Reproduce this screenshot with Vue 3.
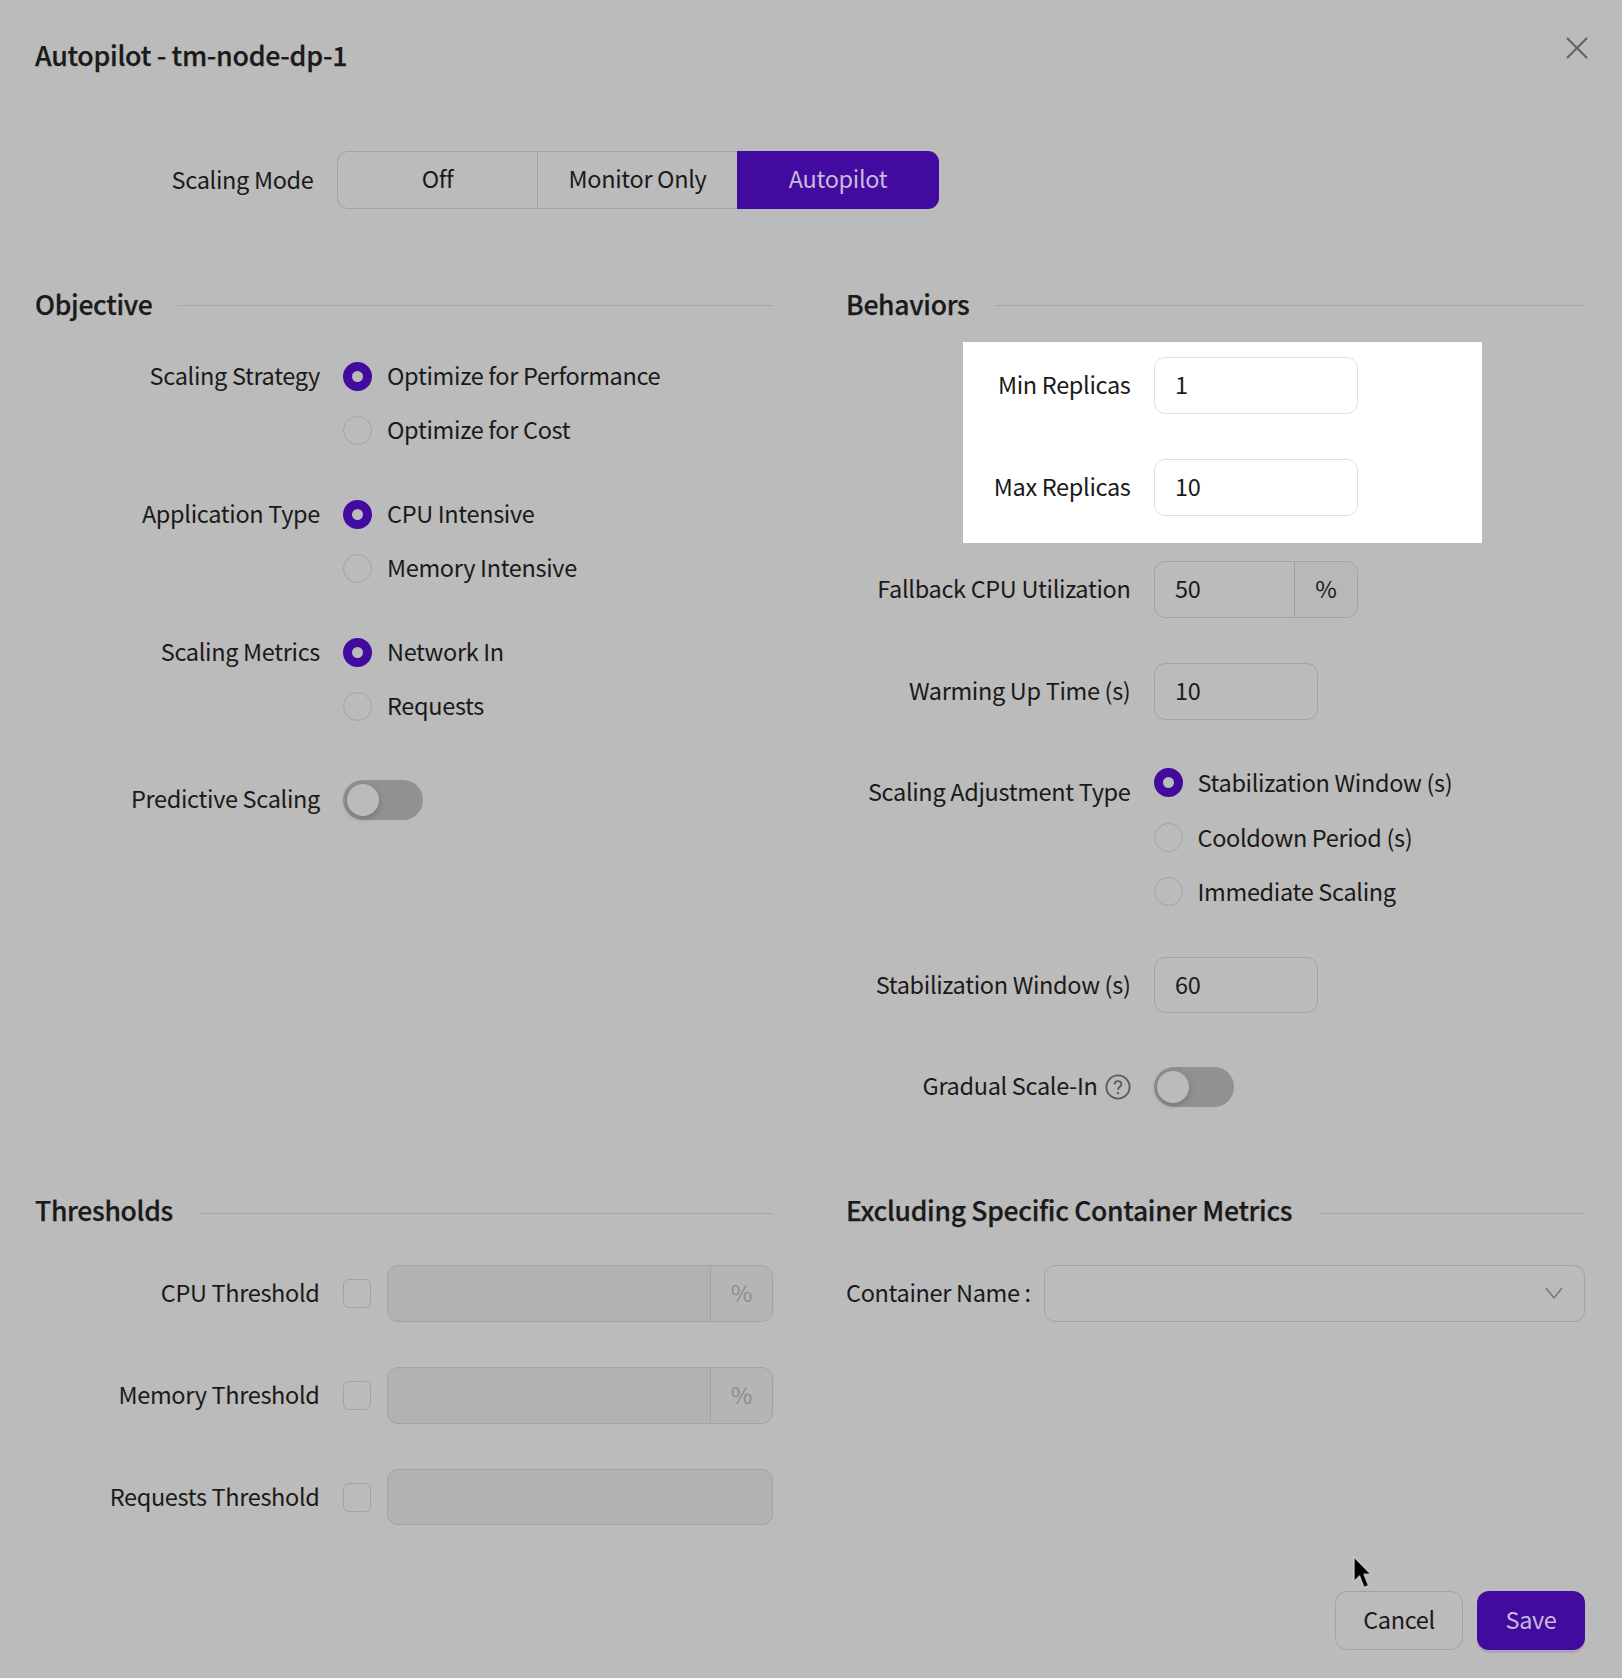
<script setup>
const objective = [
  { label: 'Scaling Strategy', options: ['Optimize for Performance', 'Optimize for Cost'] },
  { label: 'Application Type', options: ['CPU Intensive', 'Memory Intensive'] },
  { label: 'Scaling Metrics', options: ['Network In', 'Requests'] },
]
const adjustment = ['Stabilization Window (s)', 'Cooldown Period (s)', 'Immediate Scaling']
const thresholds = [
  { label: 'CPU Threshold', unit: '%' },
  { label: 'Memory Threshold', unit: '%' },
  { label: 'Requests Threshold', unit: '' },
]
</script>

<template>
  <div class="page">
    <button class="close" aria-label="Close">
      <svg viewBox="0 0 24 24" width="24" height="24" fill="none" stroke="#666" stroke-width="2.3">
        <path d="M2 2 22 22M22 2 2 22" />
      </svg>
    </button>

    <h1 class="title">Autopilot - tm-node-dp-1</h1>

    <div class="mode">
      <span class="mode-label">Scaling Mode</span>
      <div class="seg">
        <span class="seg-item first">Off</span>
        <span class="seg-item middle">Monitor Only</span>
        <span class="seg-item on">Autopilot</span>
      </div>
    </div>

    <div class="columns">
      <section class="col">
        <div class="heading"><h2>Objective</h2><i></i></div>
        <div class="objective">
          <div v-for="group in objective" :key="group.label" class="obj-group">
            <span class="label obj-label">{{ group.label }}</span>
            <div class="radios">
              <label v-for="(opt, i) in group.options" :key="opt" class="radio">
                <span class="dot" :class="{ checked: i === 0 }"></span><span class="radio-text">{{ opt }}</span>
              </label>
            </div>
          </div>
          <div class="obj-toggle">
            <span class="label obj-label">Predictive Scaling</span>
            <span class="switch"><b></b></span>
          </div>
        </div>
      </section>

      <section class="col">
        <div class="heading shift"><h2>Behaviors</h2><i></i></div>
        <div class="highlight">
          <div class="row">
            <span class="label hl-label">Min Replicas</span>
            <span class="input wide white">1</span>
          </div>
          <div class="row hl-second">
            <span class="label hl-label">Max Replicas</span>
            <span class="input wide white">10</span>
          </div>
        </div>
        <div class="row fallback">
          <span class="label beh-label">Fallback CPU Utilization</span>
          <span class="input wide split"><span class="val">50</span><span class="unit">%</span></span>
        </div>
        <div class="row warm">
          <span class="label beh-label">Warming Up Time (s)</span>
          <span class="input narrow">10</span>
        </div>
        <div class="adjust">
          <span class="label beh-label adjust-label">Scaling Adjustment Type</span>
          <div class="radios">
            <label v-for="(opt, i) in adjustment" :key="opt" class="radio">
              <span class="dot" :class="{ checked: i === 0 }"></span><span class="radio-text">{{ opt }}</span>
            </label>
          </div>
        </div>
        <div class="row stab">
          <span class="label beh-label">Stabilization Window (s)</span>
          <span class="input narrow">60</span>
        </div>
        <div class="row gradual">
          <span class="label beh-label help-label">
            <span class="help-text">Gradual Scale-In</span>
            <svg class="help" viewBox="0 0 26 26" width="26" height="26" fill="none" stroke="#5c5c5c" stroke-width="1.9">
              <circle cx="13" cy="13" r="11.6" />
              <path d="M9.6 10.4c0-2 1.5-3.3 3.4-3.3s3.4 1.3 3.4 3.1c0 2.6-3.4 2.6-3.4 5.5" />
              <circle cx="13" cy="19" r="1.2" fill="#5c5c5c" stroke="none" />
            </svg>
          </span>
          <span class="switch"><b></b></span>
        </div>
      </section>

      <section class="col">
        <div class="heading lower"><h2>Thresholds</h2><i></i></div>
        <div class="thresholds">
          <div v-for="t in thresholds" :key="t.label" class="threshold">
            <span class="label obj-label">{{ t.label }}</span>
            <span class="check"></span>
            <span class="input disabled">
              <span class="val"></span>
              <span v-if="t.unit" class="unit">{{ t.unit }}</span>
            </span>
          </div>
        </div>
      </section>

      <section class="col">
        <div class="heading shift lower"><h2>Excluding Specific Container Metrics</h2><i></i></div>
        <div class="container-row">
          <span class="label">Container Name :</span>
          <span class="input select">
            <svg viewBox="0 0 18 12" width="18" height="12" fill="none" stroke="#777" stroke-width="1.5">
              <path d="M1 1 9 11 17 1" />
            </svg>
          </span>
        </div>
      </section>
    </div>

    <div class="footer">
      <button class="btn">Cancel</button>
      <button class="btn primary">Save</button>
    </div>

    <svg class="cursor" viewBox="-2 -2 21 35" width="21" height="35">
      <path d="M0 0V24.5L5.5 19 10 30.5 14.6 28.6 10 17.3H17Z" fill="#000" stroke="#dcdcdc" stroke-opacity=".7" stroke-width="1.6" stroke-linejoin="round" />
    </svg>
  </div>
</template>

<style>
html, body { margin: 0; background: #bbb; }
</style>

<style scoped>
.page {
  position: relative;
  box-sizing: border-box;
  width: 1622px;
  height: 1678px;
  padding: 35px 37px 0 35px;
  background: #bbb;
  color: #1a1a1a;
  font-family: "Noto Sans CJK SC", "Noto Sans", sans-serif;
  font-size: 23.5px;
  letter-spacing: -0.33px;
  line-height: 36px;
  overflow: hidden;
}
.close {
  position: absolute;
  top: 36px;
  left: 1565px;
  width: 24px;
  height: 24px;
  padding: 0;
  border: 0;
  background: none;
}
.close svg { display: block; }
.title {
  margin: 0;
  height: 40px;
  font-size: 26.8px;
  letter-spacing: -0.32px;
  line-height: 40px;
  font-weight: 500;
  -webkit-text-stroke: 0.25px #1a1a1a;
}
.mode {
  display: flex;
  align-items: center;
  margin-top: 76px;
  height: 58px;
}
.mode-label {
  width: 302px;
  padding: 0 23.5px 3px 0;
  box-sizing: border-box;
  text-align: right;
}
.seg {
  display: flex;
  height: 58px;
}
.seg-item {
  display: flex;
  align-items: center;
  justify-content: center;
  box-sizing: border-box;
  border: 1.5px solid #a3a3a3;
  border-left: 0;
  padding-bottom: 5px;
}
.seg-item.first {
  width: 201px;
  border-left: 1.5px solid #a3a3a3;
  border-radius: 11px 0 0 11px;
}
.seg-item.middle {
  width: 199px;
  border-right: 0;
}
.seg-item.on {
  width: 202px;
  border: 0;
  border-radius: 0 11px 11px 0;
  background: #430aa0;
  color: #c6bcd8;
}
.columns {
  display: grid;
  grid-template-columns: 738px 738px;
  column-gap: 74px;
  margin-top: 76px;
}
.heading {
  display: flex;
  align-items: center;
  gap: 26px;
  height: 40px;
}
.heading.shift { margin: 0 1px 0 -1px; }
.heading h2 {
  margin: -3px 0 0;
  font-size: 26.5px;
  letter-spacing: -0.3px;
  line-height: 40px;
  font-weight: 500;
  white-space: nowrap;
  -webkit-text-stroke: 0.25px #1a1a1a;
}
.heading i {
  flex: 1;
  height: 1px;
  background: #a9a9a9;
}
.heading.lower i { margin-top: 3px; }
.label { white-space: nowrap; text-align: right; padding-bottom: 3px; }
.objective { padding-top: 24px; }
.obj-group, .obj-toggle, .threshold {
  display: flex;
  align-items: flex-start;
}
.obj-group { margin-bottom: 29px; }
.obj-label {
  width: 285px;
  margin-right: 23px;
  padding-bottom: 0;
  line-height: 52px;
}
.radios { display: flex; flex-direction: column; }
.radio {
  display: flex;
  align-items: center;
  gap: 15px;
  height: 54.5px;
  white-space: nowrap;
}
.radio-text { padding-bottom: 3px; }
.radio:nth-child(even) .radio-text { padding-bottom: 4px; }
.adjust .radio .radio-text { padding-bottom: 1px; }
.dot {
  box-sizing: border-box;
  width: 29px;
  height: 29px;
  border: 1.5px solid #a3a3a3;
  border-radius: 50%;
  background: #bbb;
}
.dot.checked {
  border: 9px solid #430aa0;
  background: #bbb;
}
.obj-toggle { align-items: center; margin-top: 46px; }
.obj-toggle .obj-label { line-height: 37px; padding-bottom: 3px; }
.switch {
  position: relative;
  display: block;
  width: 80px;
  height: 40px;
  border-radius: 20px;
  background: #919191;
}
.switch b {
  position: absolute;
  top: 4px;
  left: 3.5px;
  width: 32px;
  height: 32px;
  border-radius: 50%;
  background: #bbb;
  box-shadow: 0 2px 6px rgba(0, 0, 0, .22);
}
.row {
  display: flex;
  align-items: center;
  gap: 23px;
}
.beh-label { width: 283.5px; }
.hl-label { width: 167.5px; }
.highlight {
  box-sizing: border-box;
  width: 519px;
  height: 200.7px;
  margin-left: 116px;
  margin-top: 17px;
  padding-top: 15px;
  background: #fff;
}
.hl-second { margin-top: 45.5px; }
.input {
  display: flex;
  align-items: center;
  box-sizing: border-box;
  height: 56.7px;
  padding: 0 0 3px 20.5px;
  border: 1.5px solid #a3a3a3;
  border-radius: 11px;
}
.wide { width: 204.5px; }
.narrow { width: 164.5px; }
.white { border-color: #e0e0e0; }
.split, .disabled { padding: 0; overflow: hidden; }
.val {
  flex: 1;
  align-self: stretch;
  display: flex;
  align-items: center;
  padding: 0 0 3px 20.5px;
}
.unit {
  align-self: stretch;
  display: flex;
  align-items: center;
  justify-content: center;
  width: 62px;
  padding-bottom: 3px;
  border-left: 1.5px solid #a3a3a3;
  background: #b8b8b8;
}
.fallback { margin-top: 18.3px; }
.warm { margin-top: 45.3px; }
.adjust {
  display: flex;
  gap: 23px;
  margin-top: 36px;
}
.adjust-label { padding-bottom: 0; line-height: 71px; }
.stab { margin-top: 37.5px; }
.gradual { margin-top: 53.5px; margin-bottom: 84.7px; }
.help-label {
  display: flex;
  align-items: center;
  justify-content: flex-end;
  gap: 7px;
  padding-bottom: 0;
}
.help-text { padding-bottom: 3px; }
.help { display: block; }
.thresholds { padding-top: 33.3px; }
.threshold { align-items: center; margin-bottom: 45.3px; height: 56.7px; }
.threshold .obj-label { width: 286px; line-height: 36px; padding-bottom: 3px; }
.check {
  box-sizing: border-box;
  width: 29px;
  height: 29px;
  margin-right: 15.5px;
  border: 1.5px solid #a3a3a3;
  border-radius: 6px;
  background: #bbb;
}
.disabled {
  width: 388px;
  background: #b2b2b2;
}
.disabled .unit {
  width: 61px;
  color: #8d8d8d;
  background: #b5b5b5;
}
.container-row {
  display: flex;
  align-items: center;
  gap: 13.5px;
  margin: 33.3px 0 0 -1px;
}
.select {
  flex: 1;
  justify-content: flex-end;
  padding: 0 21px 0 0;
}
.select svg { display: block; }
.footer {
  display: flex;
  justify-content: flex-end;
  gap: 14px;
  margin-top: 20px;
}
.btn {
  box-sizing: border-box;
  width: 128px;
  height: 59px;
  padding: 0 0 3px;
  border: 1.5px solid #a3a3a3;
  border-radius: 12px;
  background: transparent;
  color: #1a1a1a;
  font: inherit;
  letter-spacing: inherit;
}
.btn.primary {
  width: 108px;
  border: 0;
  background: #430aa0;
  color: #c6bcd8;
  box-shadow: 0 3px 0 rgba(67, 10, 160, .12);
}
.cursor {
  position: absolute;
  left: 1352px;
  top: 1555px;
}
</style>
